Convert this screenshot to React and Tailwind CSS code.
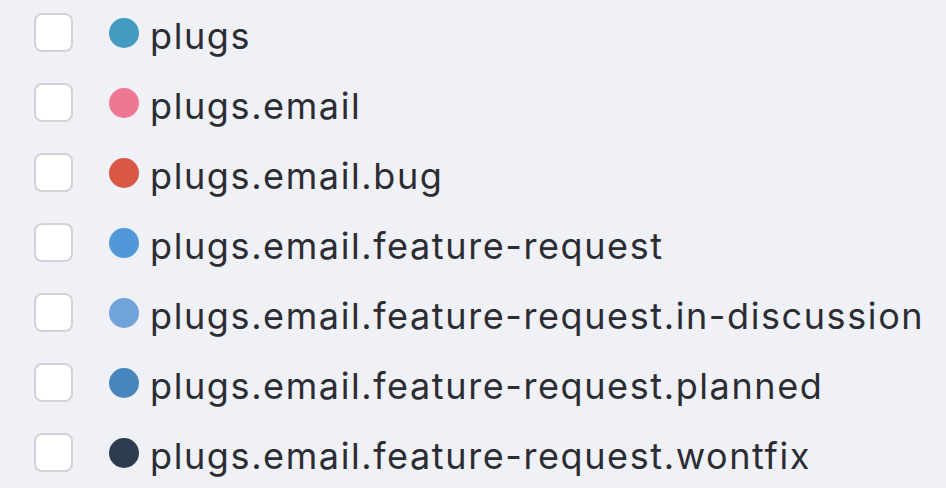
export default function App() {
  const items = [
    ["plugs", "#449BC2"],
    ["plugs.email", "#EE7794"],
    ["plugs.email.bug", "#D95845"],
    ["plugs.email.feature-request", "#5098D8"],
    ["plugs.email.feature-request.in-discussion", "#6FA3DA"],
    ["plugs.email.feature-request.planned", "#4785BE"],
    ["plugs.email.feature-request.wontfix", "#2E3C50"],
  ];
  return (
    <div
      className="w-[946px] h-[488px] bg-[#F0F1F7] overflow-hidden pl-[34px] pt-[13px] flex flex-col gap-[31px]"
      style={{ fontFamily: "Inter, 'Noto Sans', sans-serif" }}
    >
      {items.map(([label, color]) => (
        <div key={label} className="flex items-center h-[39px]">
          <div className="w-[39px] h-[39px] rounded-[8px] border-2 border-[#D2D2D8] bg-white shrink-0" />
          <div
            className="ml-[36px] w-[30px] h-[30px] rounded-full shrink-0"
            style={{ backgroundColor: color }}
          />
          <span className="ml-[11px] mt-[7px] text-[36px] leading-none tracking-[1.6px] text-[#2B2D33] whitespace-nowrap">
            {label}
          </span>
        </div>
      ))}
    </div>
  );
}
